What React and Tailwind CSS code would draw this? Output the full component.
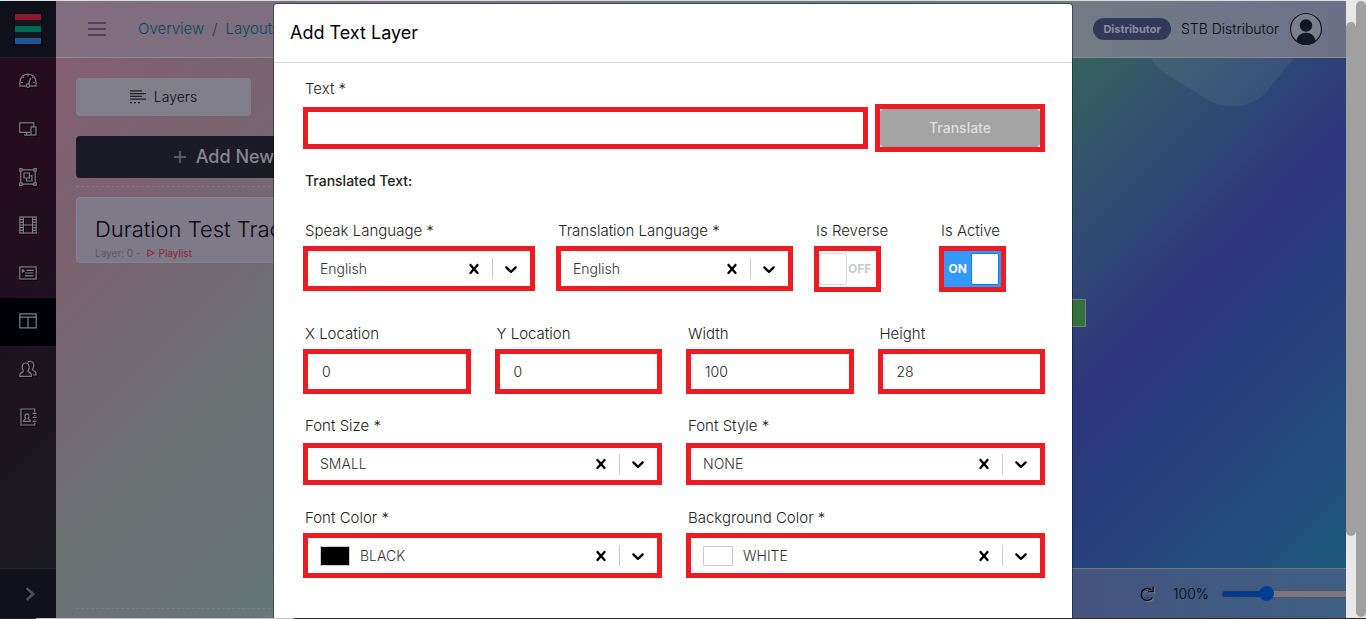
import React, { useState } from "react";

function NavIcon({ children }) {
  return (
    <svg
      viewBox="0 0 18 18"
      className="h-[18px] w-[18px] drop-shadow-[1px_1px_0_#05030a]"
      fill="none"
      stroke="#827d88"
      strokeWidth="1.2"
      aria-hidden="true"
    >
      {children}
    </svg>
  );
}

const NAV = [
  {
    label: "Dashboard",
    icon: (
      <NavIcon>
        <path d="M6.8 14.2H.9V10.2a8.1 8.1 0 0 1 16.2 0v4H11.2" />
        <circle cx="9" cy="13.6" r="1.8" />
        <path d="M9.7 11.8 11.6 6M9 2.4v2M3.9 4.9l1.2 1.2M14 5l-1 1M2.2 10.5h1.7M14.2 10.5h1.7" />
      </NavIcon>
    ),
  },
  {
    label: "Devices",
    icon: (
      <NavIcon>
        <path d="M11 12.4H.8V2.8h14v4M5 15.2h6.5M7.7 12.6v2.4" />
        <rect x="12" y="7" width="5" height="8" />
      </NavIcon>
    ),
  },
  {
    label: "Groups",
    icon: (
      <NavIcon>
        <path d="M3.2 1.8h11.6M3.2 16.2h11.6M1.8 3.2v11.6M16.2 3.2v11.6" />
        <rect x=".7" y=".7" width="2.4" height="2.4" />
        <rect x="14.9" y=".7" width="2.4" height="2.4" />
        <rect x=".7" y="14.9" width="2.4" height="2.4" />
        <rect x="14.9" y="14.9" width="2.4" height="2.4" />
        <path d="M5 5h5.4v5H5zM10.4 7.8H13V13H7.6v-3" />
      </NavIcon>
    ),
  },
  {
    label: "Media",
    icon: (
      <NavIcon>
        <rect x=".8" y="1" width="16.4" height="16" />
        <path d="M4.4 1v16M13.6 1v16M4.4 9h9.2M1 3.6h3M1 6.3h3M1 9h3M1 11.7h3M1 14.4h3M14 3.6h3M14 6.3h3M14 9h3M14 11.7h3M14 14.4h3" />
      </NavIcon>
    ),
  },
  {
    label: "Playlists",
    icon: (
      <NavIcon>
        <rect x=".8" y="3" width="16.4" height="12" />
        <path d="M7.5 6.4h7M6 9h8.5M6 11.8h8.5" />
        <path d="M3 5l3 1.9-3 1.9z" fill="#827d88" strokeWidth=".4" />
      </NavIcon>
    ),
  },
  {
    label: "Layouts",
    active: true,
    icon: (
      <NavIcon>
        <path d="M.8 1.9h16.4v14H.8zM.8 5.2h16.4M9 5.2v10.6" />
      </NavIcon>
    ),
  },
  {
    label: "Users",
    icon: (
      <NavIcon>
        <path d="M.8 16.4c-.2-3 .9-3.5 3.4-4.5.6-.7.2-1.3-.4-2.2C2.7 7 3 3 6.7 3s4 4 2.9 6.7c-.6.9-1 1.5-.4 2.2 2.5 1 3.3 1.5 3.2 4.5z" />
        <path d="M8.6 2.3c1-.9 2.3-1 3.4-.8 3.2.5 3.2 4.2 2.2 6.600-.5.9-.7 1.6-.2 2.2 2.300 1 3.400 1.7 3.200 4.700h-3" />
      </NavIcon>
    ),
  },
  {
    label: "Contacts",
    icon: (
      <NavIcon>
        <path d="M15.8 4V1H2v16h13.8v-2.4M15.8 7v1M15.8 11v1M13.6 5.4h4M13.6 9.4h4M13.6 13.4h4" />
        <path d="M4.6 13.3c0-1.8.7-1.9 2.2-2.5-1.500-2.300-.9-5 1.200-5s2.700 2.700 1.200 5c1.500.6 2.200.7 2.200 2.500z" />
      </NavIcon>
    ),
  },
];

function Sidebar() {
  return (
    <aside className="flex w-14 shrink-0 flex-col bg-[linear-gradient(135deg,#29081e_0%,#221020_40%,#1b1520_70%,#1a1a20_100%)]">
      <a
        href="#home"
        aria-label="Home"
        className="flex h-[58px] shrink-0 items-center justify-center border-y border-t-[#dce0dc] border-b-[#22202b] bg-[#0f101a]"
      >
        <svg viewBox="0 0 28 32" className="h-8 w-7" aria-hidden="true">
          <rect width="28" height="32" fill="#06070e" />
          <rect x="1" y="1" width="26" height="6" fill="#8a182e" />
          <rect x="1" y="7" width="26" height="6" fill="#171722" />
          <rect x="1" y="13" width="26" height="6" fill="#016a52" />
          <rect x="1" y="19" width="26" height="6" fill="#171722" />
          <rect x="1" y="25" width="26" height="6" fill="#1c5496" />
        </svg>
      </a>
      <nav className="flex flex-1 flex-col">
        {NAV.map((n) => (
          <a
            key={n.label}
            href={"#" + n.label.toLowerCase()}
            aria-label={n.label}
            className={
              n.active
                ? "flex h-12 items-center justify-center bg-[#010108] pb-0.5"
                : "flex h-12 items-center justify-center pb-0.5"
            }
          >
            {n.icon}
          </a>
        ))}
      </nav>
      <button
        type="button"
        aria-label="Expand menu"
        className="flex h-[50px] items-center justify-center border-t border-[#25232c] bg-[#10111b] pl-1"
      >
        <svg viewBox="0 0 12 16" className="h-4 w-3" fill="none" strokeWidth="3" aria-hidden="true">
          <path d="M1 1.5 7 8l-6 6" stroke="#030308" />
          <path d="M2.5 2 9 8l-6.5 6" stroke="#4a4c5e" />
        </svg>
      </button>
    </aside>
  );
}

function Header() {
  return (
    <header className="flex h-[58px] shrink-0 items-center border-y border-t-[#dce0dc] border-b-[#8b8791] bg-[linear-gradient(90deg,#816d7e_0%,#79707e_25%,#70787f_60%,#727b84_80%,#6d7088_100%)] pr-[23px] pl-8">
      <button type="button" aria-label="Toggle menu" className="flex w-[18px] flex-col gap-1">
        <span className="h-0.5 bg-[#4d4457]" />
        <span className="h-0.5 bg-[#4d4457]" />
        <span className="h-0.5 bg-[#4d4457]" />
      </button>
      <nav className="ml-8 flex items-center gap-2 text-[15px] font-light text-[#084863]">
        <a href="#overview">Overview</a>
        <span className="text-[#35303f]">/</span>
        <a href="#layouts">Layouts</a>
      </nav>
      <div className="ml-auto flex items-center gap-2.5">
        <span className="flex h-[22px] items-center rounded-full bg-[#33385a] px-2.5 text-[11px] font-bold text-[#8d8d9c]">
          Distributor
        </span>
        <span className="text-sm font-light text-[#06060e]">STB Distributor</span>
        <svg viewBox="0 0 34 34" className="h-[34px] w-[34px]" aria-hidden="true">
          <circle cx="17" cy="17" r="16.5" fill="#8e8c98" />
          <circle cx="17" cy="17" r="15.5" fill="#7c7e8b" stroke="#131420" strokeWidth="1.2" />
          <circle cx="17" cy="13.5" r="6.2" fill="#131724" />
          <path d="M7.600 29c.5-5.5 4.5-8.3 9.4-8.3s8.9 2.8 9.4 8.3a14 14 0 0 1-18.8 0z" fill="#131724" />
        </svg>
      </div>
    </header>
  );
}

function LayerPanel() {
  return (
    <section className="flex w-[340px] shrink-0 flex-col bg-[linear-gradient(135deg,#835f72_0%,#79636f_25%,#6f6b75_46%,#6d7073_54%,#697375_74%,#65797a_90%,#657b74_100%)] px-5 pt-5 text-[#22202b]">
      <button
        type="button"
        className="flex h-[38px] w-[175px] items-center justify-center gap-2 rounded bg-[#81808a] text-sm font-light text-[#0d0b14]"
      >
        <svg viewBox="0 0 16 14" className="h-3.5 w-4" stroke="#22202b" strokeWidth="1.2" aria-hidden="true">
          <path d="M0 .8h12M0 3.6h16M0 6.4h12M0 9.2h16" />
          <path d="M0 12.6h2M4 12.6h2M8 12.6h2" />
        </svg>
        Layers
      </button>
      <button
        type="button"
        className="mt-5 flex h-[42px] items-center justify-center gap-2.5 rounded bg-[#1a1b25] pr-1 text-lg font-medium text-[#88858e]"
      >
        <svg viewBox="0 0 12 12" className="h-3 w-3" stroke="#6b6a74" strokeWidth="1.5" aria-hidden="true">
          <path d="M6 0v12M0 6h12" />
        </svg>
        Add New
      </button>
      <div className="mt-2 border-t border-dashed border-[#85737f]" />
      <article className="mt-2.5 h-[66px] rounded border border-[#87828e] bg-[#7f7a87] px-[18px] pt-[15px]">
        <h2 className="text-[22px] leading-8 font-light whitespace-nowrap text-[#08080f]">Duration Test Track</h2>
        <p className="flex items-center gap-1.5 text-[10px] leading-4 text-[#5a5763]">
          Layer: 0 -
          <span className="flex items-center gap-1 text-[#8c2333]">
            <svg viewBox="0 0 8 8" className="h-2 w-2" fill="none" stroke="#8c2333" aria-hidden="true">
              <path d="M.8.7 7.2 4 .8 7.3z" />
            </svg>
            Playlist
          </span>
        </p>
      </article>
      <div className="mt-auto mb-[9px] border-t border-dashed border-[#7b7c80]" />
    </section>
  );
}

function Canvas() {
  return (
    <section className="relative flex min-w-0 flex-1 flex-col overflow-hidden bg-[linear-gradient(135deg,#5e7a70_0%,#37625d_45%,#32526f_54%,#2b367d_68%,#26427c_80%,#21507c_90%,#1d587a_97%)]">
      <svg viewBox="0 0 150 52" className="absolute top-0 right-[50px] h-[52px] w-[150px]" aria-hidden="true">
        <path d="M5 0c3 7 8 11 15 16l42 26c18 10 48 10 64-15L148 0z" fill="#ffffff" fillOpacity=".06" />
      </svg>
      <div className="absolute top-[241px] right-[260px] h-7 w-24 border border-[#78807b] bg-[#37703f]" />
      <footer className="mt-auto flex h-[50px] items-center border-t border-[#777474] bg-[linear-gradient(90deg,#565f7c_0%,#44547f_70%,#3e5f82_100%)]">
        <div className="ml-auto flex items-center text-[#06060e]">
          <button type="button" aria-label="Reset zoom" className="mr-[18px]">
            <svg viewBox="0 0 16 16" className="h-4 w-4 drop-shadow-[1px_1px_0_#7d808f]" fill="none" stroke="#0d0d18" strokeWidth="1.4" aria-hidden="true">
              <path d="M12.6 4.4A6 6 0 1 0 13.4 11.400M9 5.600h5.200V.8" />
              <path d="M11 6.200A4 4 0 1 0 9.800 11.600" strokeWidth=".6" />
            </svg>
          </button>
          <span className="mr-3 text-sm font-light">100%</span>
          <input
            type="range"
            aria-label="Zoom"
            min="0"
            max="100"
            defaultValue="30"
            className="-mr-4 h-2 w-[141px] appearance-none rounded-full border border-[#55525f] bg-[linear-gradient(90deg,#003a8c_32%,#7a7681_32%)] [&::-webkit-slider-thumb]:h-[15px] [&::-webkit-slider-thumb]:w-[15px] [&::-webkit-slider-thumb]:appearance-none [&::-webkit-slider-thumb]:rounded-full [&::-webkit-slider-thumb]:bg-[#003f96]"
          />
        </div>
      </footer>
    </section>
  );
}

function Label({ htmlFor, children }) {
  return (
    <label htmlFor={htmlFor} className="block pl-0.5 text-[15px] leading-6 font-light whitespace-nowrap text-[#222]">
      {children}
    </label>
  );
}

function SelectField({ id, label, options, swatch, boxClass }) {
  const [value, setValue] = useState(options[0]);
  return (
    <div>
      <Label htmlFor={id}>{label}</Label>
      <div className={"flex items-center border-[5px] border-[#ed1c24] bg-white pr-[9px] pl-3 " + boxClass}>
        {swatch && <span className={"mr-2.5 h-5 w-[30px] shrink-0 border border-[#ccc] " + swatch} />}
        <select
          id={id}
          value={value}
          onChange={(e) => setValue(e.target.value)}
          className="h-full min-w-0 flex-1 appearance-none bg-transparent text-sm font-light text-[#333] outline-none"
        >
          <option value="" />
          {options.map((o) => (
            <option key={o}>{o}</option>
          ))}
        </select>
        <button type="button" aria-label={"Clear " + label} onClick={() => setValue("")} className="shrink-0">
          <svg viewBox="0 0 20 20" className="h-5 w-5" fill="#000">
            <path d="M14.348 14.849c-0.469 0.469-1.229 0.469-1.697 0l-2.651-3.030-2.651 3.029c-0.469 0.469-1.229 0.469-1.697 0-0.469-0.469-0.469-1.229 0-1.697l2.758-3.15-2.759-3.152c-0.469-0.469-0.469-1.228 0-1.697s1.228-0.469 1.697 0l2.652 3.031 2.651-3.031c0.469-0.469 1.228-0.469 1.697 0s0.469 1.229 0 1.697l-2.758 3.152 2.758 3.15c0.469 0.469 0.469 1.229 0 1.698z" />
          </svg>
        </button>
        <span className="mx-2 h-[21px] w-px shrink-0 bg-[#ccc]" />
        <svg viewBox="0 0 20 20" className="h-5 w-5 shrink-0" fill="#000" aria-hidden="true">
          <path d="M4.516 7.548c0.436-0.446 1.043-0.481 1.576 0l3.908 3.747 3.908-3.747c0.533-0.481 1.141-0.446 1.574 0 0.436 0.445 0.408 1.197 0 1.615-0.406 0.418-4.695 4.502-4.695 4.502-0.217 0.223-0.502 0.335-0.787 0.335s-0.57-0.112-0.789-0.335c0 0-4.287-4.084-4.695-4.502s-0.436-1.17 0-1.615z" />
        </svg>
      </div>
    </div>
  );
}

function ToggleField({ id, label, initial }) {
  const [on, setOn] = useState(initial);
  return (
    <div>
      <Label htmlFor={id}>{label}</Label>
      <label
        className={
          on
            ? "relative mt-[3px] flex h-[46px] w-[67px] cursor-pointer items-center justify-end gap-1 border-[5px] border-[#ed1c24] bg-[#39f] pr-0.5"
            : "relative mt-[3px] flex h-[46px] w-[67px] cursor-pointer flex-row-reverse items-center justify-end gap-px border-[5px] border-[#ed1c24] bg-white"
        }
      >
        <input id={id} type="checkbox" checked={on} onChange={() => setOn(!on)} className="sr-only" />
        <span className={on ? "text-xs font-bold text-white" : "text-xs font-bold text-[#c8cbd3]"}>
          {on ? "ON" : "OFF"}
        </span>
        <span
          className={
            on
              ? "h-8 w-7 rounded-xs border border-[#0a7cf5] bg-white"
              : "h-8 w-7 rounded-xs border border-[#d8dae3] bg-white"
          }
        />
      </label>
    </div>
  );
}

function NumberField({ id, label, value }) {
  return (
    <div>
      <Label htmlFor={id}>{label}</Label>
      <input
        id={id}
        type="text"
        inputMode="numeric"
        defaultValue={value}
        className="mt-[3px] h-[45px] w-full border-[5px] border-[#ed1c24] bg-white px-3.5 text-sm font-light text-[#222] outline-none"
      />
    </div>
  );
}

function TextLayerDialog() {
  return (
    <div
      role="dialog"
      aria-labelledby="dialog-title"
      className="mx-auto mt-[3px] w-full max-w-[800px] flex-1 overflow-hidden rounded-t border border-b-0 border-black/40 bg-white bg-clip-padding"
    >
      <h1
        id="dialog-title"
        className="border-b border-[#d8dbe0] py-4 pl-4 text-lg leading-[26px] text-black"
      >
        Add Text Layer
      </h1>
      <form className="pt-3.5 pr-[27px] pl-[29px]" onSubmit={(e) => e.preventDefault()}>
        <Label htmlFor="text">Text *</Label>
        <div className="mt-[3px] flex items-center gap-[7px]">
          <input
            id="text"
            type="text"
            className="h-[42px] min-w-0 flex-1 border-[5px] border-[#ed1c24] bg-white px-3.5 text-sm outline-none"
          />
          <div className="border-[5px] border-[#ed1c24]">
            <button
              type="button"
              className="block h-[38px] w-40 rounded bg-[#a3a3a3] text-sm font-medium text-[#dedede]"
            >
              Translate
            </button>
          </div>
        </div>
        <p className="mt-[17px] pl-0.5 text-sm leading-6 font-medium text-[#222]">Translated Text:</p>
        <div className="mt-[26px] grid grid-cols-[253fr_258fr_125fr_106fr]">
          <SelectField
            id="speak"
            label="Speak Language *"
            options={["English"]}
            boxClass="mt-[3px] mr-[21px] h-[45px]"
          />
          <SelectField
            id="translation"
            label="Translation Language *"
            options={["English"]}
            boxClass="mt-[3px] mr-[21px] h-[45px]"
          />
          <ToggleField id="reverse" label="Is Reverse" initial={false} />
          <ToggleField id="active" label="Is Active" initial={true} />
        </div>
        <div className="mt-[30px] grid grid-cols-4 gap-6">
          <NumberField id="x" label="X Location" value="0" />
          <NumberField id="y" label="Y Location" value="0" />
          <NumberField id="width" label="Width" value="100" />
          <NumberField id="height" label="Height" value="28" />
        </div>
        <div className="mt-5 grid grid-cols-2 gap-x-6 gap-y-[21px]">
          <SelectField id="size" label="Font Size *" options={["SMALL"]} boxClass="mt-[5px] h-[42px]" />
          <SelectField id="style" label="Font Style *" options={["NONE"]} boxClass="mt-[5px] h-[42px]" />
          <SelectField
            id="color"
            label="Font Color *"
            options={["BLACK"]}
            swatch="bg-black"
            boxClass="mt-[3px] h-[45px]"
          />
          <SelectField
            id="background"
            label="Background Color *"
            options={["WHITE"]}
            swatch="bg-white"
            boxClass="mt-[3px] h-[45px]"
          />
        </div>
      </form>
    </div>
  );
}

export default function App() {
  return (
    <div className="flex h-screen flex-col overflow-hidden font-['Inter','Open_Sans',sans-serif]">
      <div className="flex min-h-0 flex-1">
        <div className="relative flex min-w-0 flex-1">
          <Sidebar />
          <div className="flex min-w-0 flex-1 flex-col">
            <Header />
            <main className="flex min-h-0 flex-1">
              <LayerPanel />
              <Canvas />
            </main>
          </div>
          <div className="absolute inset-0 flex flex-col">
            <TextLayerDialog />
          </div>
        </div>
        <div className="flex w-2.5 flex-col bg-[#e8e8e8] pt-[22px] pb-[82px]" aria-hidden="true">
          <div className="flex-1 rounded-full bg-[#a0a0a0]" />
        </div>
        <div className="flex w-2.5 flex-col bg-[#e8e8e8] py-px" aria-hidden="true">
          <div className="flex-1 rounded-full bg-[#a0a0a0]" />
        </div>
      </div>
      <div className="flex h-px">
        <div className="w-9 bg-[#35251f]" />
        <div className="w-[258px] bg-[#c8c4c6]" />
        <div className="flex-1 bg-[#35251f]" />
      </div>
    </div>
  );
}
